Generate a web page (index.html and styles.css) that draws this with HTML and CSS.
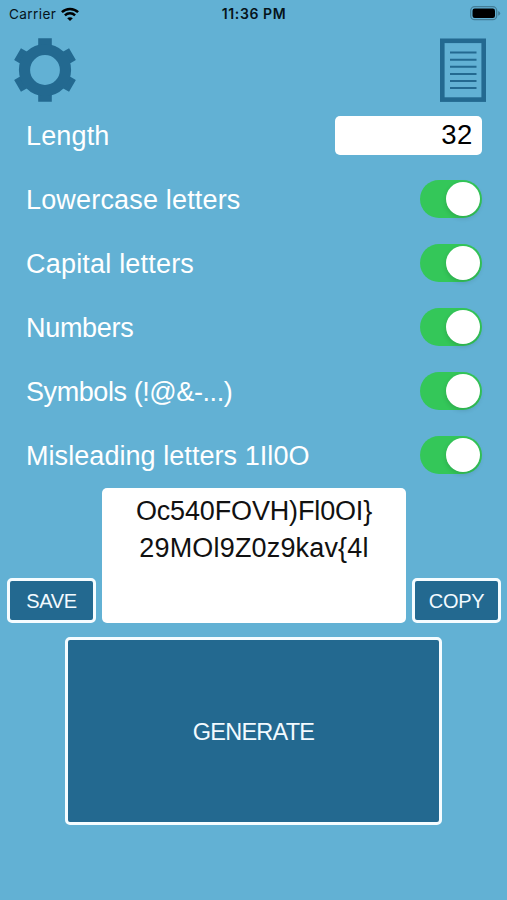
FILE: index.html
```html
<!DOCTYPE html>
<html lang="en">
<head>
<meta charset="utf-8">
<title>Password generator</title>
<link rel="stylesheet" href="styles.css">
</head>
<body>
<header class="status">
  <div class="carrier"><span>Carrier</span>
    <svg width="18" height="14" viewBox="0 0 18 14" fill="none" stroke="#000" stroke-width="2.5"><path d="M.9 5.2C5.4.9 12.6.9 17.1 5.2"/><path d="M3.9 8.3C6.8 5.6 11.2 5.6 14.1 8.3"/><path d="M9 14 6.2 11.2C7.8 9.8 10.2 9.8 11.8 11.2Z" fill="#000" stroke="none"/></svg>
  </div>
  <div class="time">11:36 PM</div>
  <svg class="battery" width="31" height="15" viewBox="0 0 31 15"><rect x=".7" y=".7" width="26" height="13" rx="4" fill="none" stroke="#437d96" stroke-width="1.3"/><rect x="2.5" y="2.5" width="22.5" height="9.5" rx="2.2"/><path d="M28.2 5v4.8q2-1 2-2.4T28.2 5Z" fill="#437d96"/></svg>
</header>
<nav class="tools">
  <svg width="64" height="64" viewBox="-32 -32 64 64" fill="#236990"><path id="bar" d="M-6.8-31.7H6.8V-20H-6.8ZM-6.8 20H6.8V31.7H-6.8Z"/><use href="#bar" transform="rotate(60)"/><use href="#bar" transform="rotate(120)"/><circle r="20.5" fill="none" stroke="#236990" stroke-width="11.2"/></svg>
  <svg width="46" height="64" viewBox="0 0 46 64" fill="none" stroke="#236990"><rect x="2.3" y="2.8" width="41.4" height="58.8" stroke-width="4.6"/><path d="M10 14.6H36.5M10 21.7H36.5M10 28.7H36.5M10 36.1H36.5M10 43.1H36.5M10 50.1H36.5" stroke-width="2"/></svg>
</nav>
<main>
  <div class="row"><label class="length">Length</label><input class="count" value="32"></div>
  <div class="row"><span class="lower">Lowercase letters</span><i class="switch"></i></div>
  <div class="row"><span class="capital">Capital letters</span><i class="switch"></i></div>
  <div class="row"><span class="numbers">Numbers</span><i class="switch"></i></div>
  <div class="row"><span class="symbols">Symbols (!@&amp;-...)</span><i class="switch"></i></div>
  <div class="row"><span class="misleading">Misleading letters 1Il0O</span><i class="switch"></i></div>
</main>
<section class="result">
  <button class="small save">SAVE</button>
  <div class="password"><div class="first">Oc540FOVH)Fl0OI}</div><div class="second">29MOl9Z0z9kav{4l</div></div>
  <button class="small copy">COPY</button>
</section>
<button class="generate">GENERATE</button>
</body>
</html>
```
FILE: styles.css
```css
* { box-sizing: border-box; }
body { margin: 0; width: 507px; height: 900px; overflow: hidden; background: #62b1d4; color: #fff; font-family: "Liberation Sans", sans-serif; }
svg { display: block; }
.status { height: 27px; padding: 0 6px 0 9px; display: grid; grid-template-columns: 1fr auto 1fr; align-items: center; color: #06141b; font-family: Inter, sans-serif; font-size: 13.6px; }
.carrier { display: flex; align-items: center; gap: 5px; letter-spacing: .4px; }
.time { margin-right: 2px; font-weight: 600; font-size: 14px; letter-spacing: .6px; }
.battery { justify-self: end; }
.tools { height: 77px; padding: 11px 21px 0 13px; display: flex; justify-content: space-between; }
main { padding: 0 25px 0 26px; }
.row { height: 64px; display: flex; align-items: center; justify-content: space-between; font-size: 27px; white-space: nowrap; }
.row > :first-child { line-height: 32px; }
.length { letter-spacing: .15px; }
.lower { letter-spacing: .17px; }
.capital { letter-spacing: .2px; }
.numbers { letter-spacing: -.3px; }
.symbols { letter-spacing: -.42px; }
.misleading { letter-spacing: .06px; }
.count { width: 147px; height: 39px; margin-bottom: 2px; border: 0; border-radius: 5px; padding: 0 9px; text-align: right; font: 27.5px "Liberation Sans", sans-serif; letter-spacing: .6px; color: #000; background: #fff; outline: 0; }
.switch { width: 62px; height: 38px; margin-bottom: 3px; padding: 2px; border-radius: 19px; background: #34c759; display: flex; justify-content: flex-end; }
.switch::after { content: ""; width: 34px; height: 34px; border-radius: 50%; background: #fff; box-shadow: 0 2px 5px #00000026; }
.result { height: 135px; padding: 0 6px 0 7px; display: flex; align-items: flex-end; justify-content: space-between; }
.password { width: 304px; height: 135px; border-radius: 5px; background: #fff; color: #111; padding-top: 5px; text-align: center; font-size: 27px; line-height: 37px; white-space: nowrap; }
.first { letter-spacing: -.15px; }
.second { letter-spacing: .17px; }
button { font-family: "Liberation Sans", sans-serif; color: #f2faff; background: #236990; border: 3px solid #f5fcff; border-radius: 5px; padding: 0; }
.small { width: 89px; height: 45px; padding-top: 2px; font-size: 20px; letter-spacing: -.3px; }
.generate { display: block; width: 377px; height: 188px; margin: 14px auto 0 65px; padding-top: 2px; font-size: 23.5px; letter-spacing: -.75px; }
```
